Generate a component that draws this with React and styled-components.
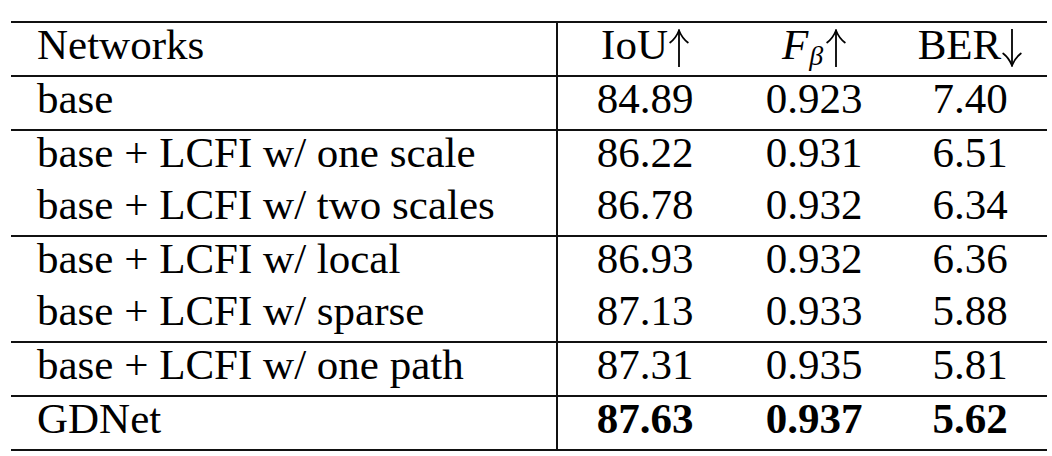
import styled, { createGlobalStyle } from "styled-components";

const GlobalStyle = createGlobalStyle`
  html, body {
    margin: 0;
    padding: 0;
    background: #ffffff;
  }
  body {
    font-family: "Liberation Serif", "Times New Roman", serif;
    color: #000000;
  }
`;

const columns = [
  { name: "Networks" },
  { name: "IoU", arrow: "up" },
  { name: "F", sub: "β", italic: true, arrow: "up" },
  { name: "BER", arrow: "down" },
];

const groups = [
  [["base", "84.89", "0.923", "7.40"]],
  [
    ["base + LCFI w/ one scale", "86.22", "0.931", "6.51"],
    ["base + LCFI w/ two scales", "86.78", "0.932", "6.34"],
  ],
  [
    ["base + LCFI w/ local", "86.93", "0.932", "6.36"],
    ["base + LCFI w/ sparse", "87.13", "0.933", "5.88"],
  ],
  [["base + LCFI w/ one path", "87.31", "0.935", "5.81"]],
  [["GDNet", "87.63", "0.937", "5.62"]],
];

const Table = styled.div`
  margin: 21px 0 0 11px;
  width: 1036px;
  border-top: 2px solid #111;
  border-bottom: 2px solid #111;
`;

const Section = styled.div`
  & + & {
    border-top: 2px solid #111;
  }
`;

const Row = styled.div`
  display: grid;
  grid-template-columns: 547px 174px 164px 151px;
  height: 52px;
  font-size: 43px;
  line-height: 43px;
  font-weight: ${(p) => (p.$bold ? 700 : 400)};
`;

const NameCell = styled.div`
  box-sizing: border-box;
  padding-left: 26px;
  border-right: 2px solid #111;
  white-space: nowrap;
  font-weight: 400;
`;

const ValueCell = styled.div`
  text-align: center;
  white-space: nowrap;
  padding-right: ${(p) => (p.$last ? "3px" : "0")};
`;

const Sub = styled.sub`
  font-size: 28px;
  line-height: 0;
  vertical-align: -6px;
  font-style: italic;
  margin-left: 1px;
`;

const ArrowSvg = styled.svg`
  width: 20px;
  height: 38px;
  vertical-align: -8px;
  margin-left: ${(p) => p.$gap}px;
  transform: ${(p) => (p.$down ? "scaleY(-1)" : "none")};
`;

function Arrow({ dir, gap }) {
  return (
    <ArrowSvg viewBox="0 0 20 38" $down={dir === "down"} $gap={gap}>
      <g fill="none" stroke="#000" strokeWidth="1.8" strokeLinecap="round">
        <path d="M10 1.5 V37.5" />
        <path d="M1.2 13.5 Q7 9 10 1.5 Q13 9 18.8 13.5" />
      </g>
    </ArrowSvg>
  );
}

function HeaderCell({ col, last }) {
  return (
    <ValueCell $last={last}>
      {col.italic ? <i>{col.name}</i> : col.name}
      {col.sub && <Sub>{col.sub}</Sub>}
      <Arrow dir={col.arrow} gap={col.sub ? 3 : 1} />
    </ValueCell>
  );
}

export default function App() {
  return (
    <>
      <GlobalStyle />
      <Table>
        <Section>
          <Row>
            <NameCell>{columns[0].name}</NameCell>
            {columns.slice(1).map((col, i) => (
              <HeaderCell key={col.name} col={col} last={i === 2} />
            ))}
          </Row>
        </Section>
        {groups.map((rows, gi) => (
          <Section key={gi}>
            {rows.map((r) => (
              <Row key={r[0]} $bold={r[0] === "GDNet"}>
                <NameCell>{r[0]}</NameCell>
                {r.slice(1).map((v, i) => (
                  <ValueCell key={i} $last={i === 2}>
                    {v}
                  </ValueCell>
                ))}
              </Row>
            ))}
          </Section>
        ))}
      </Table>
    </>
  );
}
